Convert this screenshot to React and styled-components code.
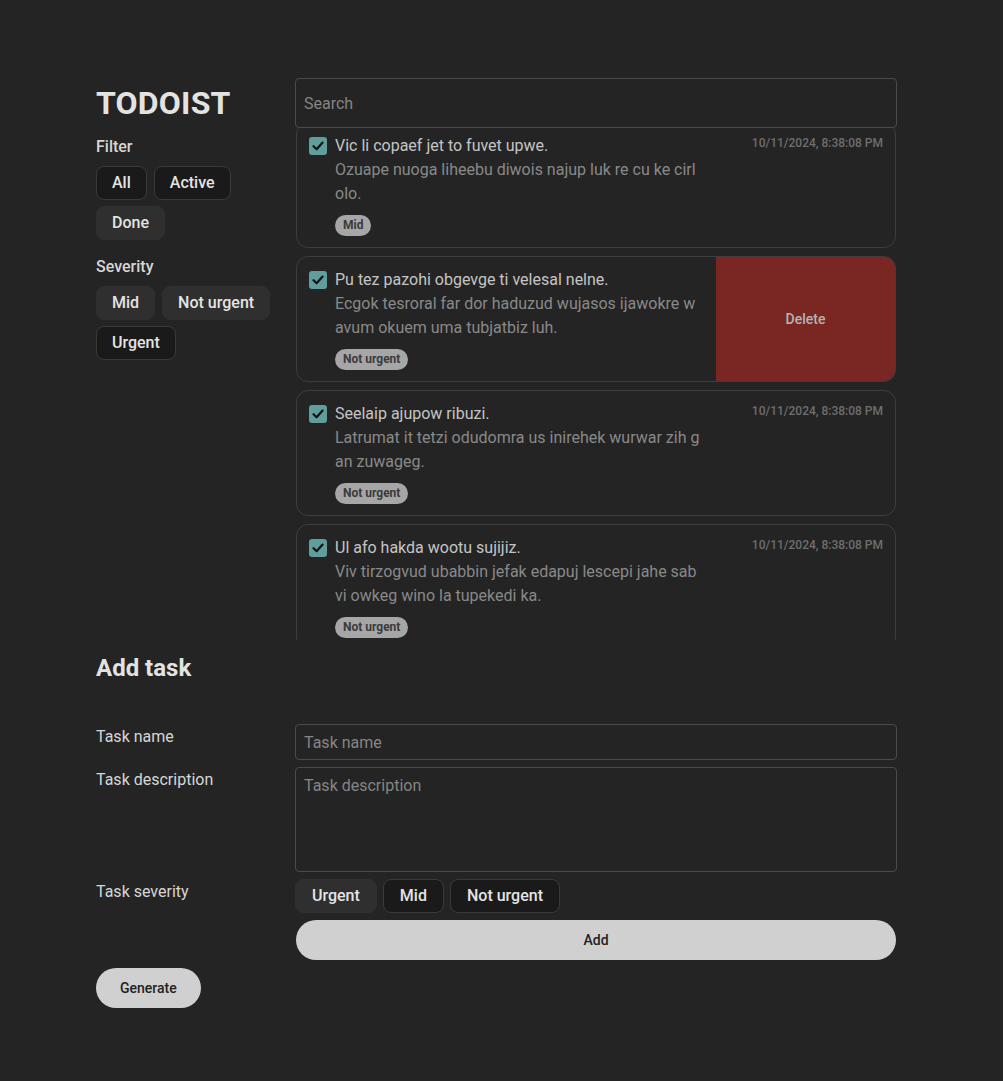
import React, { useEffect, useRef, useState } from 'react';
import styled, { createGlobalStyle } from 'styled-components';

const GlobalStyle = createGlobalStyle`
  html, body {
    margin: 0;
    padding: 0;
    background: #242424;
    color: rgba(255, 255, 255, 0.87);
    font-family: Roboto, "Liberation Sans", sans-serif;
  }
  * { box-sizing: border-box; }
`;

const Page = styled.div`
  width: 801px;
  padding: 78px 0 73px 0;
  margin-left: 96px;
`;

const Top = styled.div`
  display: grid;
  grid-template-columns: 179px 602px;
  column-gap: 20px;
`;

const Sidebar = styled.aside`
  display: flex;
  flex-direction: column;
`;

const Logo = styled.h1`
  margin: 0;
  font-size: 32px;
  font-weight: 700;
  line-height: 50px;
  color: #e3e3e3;
  letter-spacing: 0.2px;
`;

const Group = styled.div`
  display: flex;
  flex-direction: column;
  gap: 7px;
  margin-top: ${p => p.$top}px;
`;

const GroupLabel = styled.div`
  font-size: 16px;
  font-weight: 500;
  line-height: 24px;
  padding-top: 1px;
  color: #d6d6d6;
`;

const Chips = styled.div`
  display: flex;
  flex-wrap: wrap;
  gap: 6px 7px;
`;

const Chip = styled.button`
  font-family: inherit;
  font-size: 16px;
  font-weight: 500;
  line-height: 20px;
  padding: 6px 15px;
  border-radius: 8px;
  color: #e4e4e4;
  cursor: pointer;
  background: ${p => (p.$on ? '#2f2f2f' : '#1a1a1a')};
  border: 1px solid ${p => (p.$on ? '#2f2f2f' : '#3a3a3a')};
`;

const Main = styled.section`
  display: flex;
  flex-direction: column;
`;

const Search = styled.input`
  height: 50px;
  width: 100%;
  padding: 0 8px;
  background: #242424;
  border: 1px solid #4a4a4a;
  border-radius: 4px;
  color: #ddd;
  font-family: inherit;
  font-size: 16px;
  outline: none;
  &::placeholder { color: #858585; }
`;

const List = styled.div`
  height: 512px;
  overflow-y: auto;
  padding: 0 1px;
  display: flex;
  flex-direction: column;
  gap: 8px;
  scrollbar-width: none;
  &::-webkit-scrollbar { display: none; }
`;

const Card = styled.div`
  position: relative;
  flex: none;
  display: flex;
  align-items: flex-start;
  padding: 11px 12px;
  border: 1px solid #3d3d3d;
  border-radius: 12px;
  overflow: hidden;
  background: #242424;
`;

const Check = styled.span`
  flex: none;
  width: 18px;
  height: 18px;
  margin: 3px 8px 0 0;
  border-radius: 3px;
  background: #5f9e9d;
  display: flex;
  align-items: center;
  justify-content: center;
`;

const Body = styled.div`
  flex: 1;
  min-width: 0;
  display: flex;
  flex-direction: column;
  align-items: flex-start;
`;

const Title = styled.div`
  font-size: 16px;
  line-height: 24px;
  color: #c4c4c4;
`;

const Desc = styled.div`
  font-size: 16px;
  line-height: 24px;
  color: #898989;
  word-break: break-all;
`;

const Badge = styled.span`
  margin-top: 9px;
  padding: 2px 8px;
  border-radius: 11px;
  background: #a6a6a6;
  color: #3b3b3b;
  font-size: 12px;
  font-weight: 700;
  line-height: 17px;
`;

const Stamp = styled.div`
  flex: none;
  width: 182px;
  text-align: right;
  white-space: nowrap;
  font-size: 12px;
  font-weight: 500;
  line-height: 18px;
  color: #6e6e6e;
`;

const DeletePanel = styled.div`
  position: absolute;
  top: 0;
  right: 0;
  bottom: 0;
  width: 179px;
  background: #7a2622;
  display: flex;
  align-items: center;
  justify-content: center;
  font-size: 14px;
  font-weight: 500;
  color: #b4b4b4;
`;

const AddTitle = styled.h2`
  margin: 14px 0 0;
  font-size: 24px;
  font-weight: 700;
  line-height: 28px;
  color: #e3e3e3;
`;

const Form = styled.form`
  margin-top: 42px;
  display: grid;
  grid-template-columns: 179px 602px;
  column-gap: 20px;
  row-gap: 7px;
`;

const FieldLabel = styled.label`
  font-size: 16px;
  line-height: 24px;
  padding-top: 1px;
  color: #d6d6d6;
`;

const TextInput = styled.input`
  height: 36px;
  padding: 0 8px;
  background: #242424;
  border: 1px solid #4a4a4a;
  border-radius: 4px;
  color: #ddd;
  font-family: inherit;
  font-size: 16px;
  outline: none;
  &::placeholder { color: #858585; }
`;

const TextArea = styled.textarea`
  height: 105px;
  margin: 0;
  padding: 8px;
  resize: none;
  background: #242424;
  border: 1px solid #4a4a4a;
  border-radius: 4px;
  color: #ddd;
  font-family: inherit;
  font-size: 16px;
  line-height: 20px;
  outline: none;
  &::placeholder { color: #858585; }
`;

const SeverityRow = styled.div`
  display: flex;
  gap: 6px;
  & > button { padding-left: 16px; padding-right: 16px; }
`;

const PillButton = styled.button`
  height: 40px;
  padding: 0 24px;
  border: none;
  border-radius: 20px;
  background: #d0d0d0;
  color: #222;
  font-family: inherit;
  font-size: 14px;
  font-weight: 500;
  cursor: pointer;
  width: ${p => (p.$wide ? '600px' : 'auto')};
  margin-left: ${p => (p.$wide ? '1px' : '0')};
  justify-self: start;
`;

const Footer = styled.div`
  margin-top: 8px;
`;

const CheckMark = () => (
  <svg width="14" height="14" viewBox="0 0 14 14">
    <path d="M2.5 7.2 L5.6 10.2 L11.6 3.6" fill="none" stroke="#111" strokeWidth="2.2" strokeLinecap="round" strokeLinejoin="round" />
  </svg>
);

const tasks = [
  {
    id: 1,
    title: 'Vic li copaef jet to fuvet upwe.',
    desc: 'Ozuape nuoga liheebu diwois najup luk re cu ke cirlolo.',
    severity: 'Mid'
  },
  {
    id: 2,
    title: 'Pu tez pazohi obgevge ti velesal nelne.',
    desc: 'Ecgok tesroral far dor haduzud wujasos ijawokre wavum okuem uma tubjatbiz luh.',
    severity: 'Not urgent',
    swiped: true
  },
  {
    id: 3,
    title: 'Seelaip ajupow ribuzi.',
    desc: 'Latrumat it tetzi odudomra us inirehek wurwar zih gan zuwageg.',
    severity: 'Not urgent'
  },
  {
    id: 4,
    title: 'Ul afo hakda wootu sujijiz.',
    desc: 'Viv tirzogvud ubabbin jefak edapuj lescepi jahe sabvi owkeg wino la tupekedi ka.',
    severity: 'Not urgent'
  }
];

const App = () => {
  const listRef = useRef(null);
  const [filter] = useState('Done');

  useEffect(() => {
    // list is scrolled a little in the screenshot
    if (listRef.current) listRef.current.scrollTop = 6;
  }, []);

  return (
    <Page>
      <GlobalStyle />
      <Top>
        <Sidebar>
          <Logo>TODOIST</Logo>
          <Group $top={6}>
            <GroupLabel>Filter</GroupLabel>
            <Chips>
              {['All', 'Active', 'Done'].map(f => (
                <Chip key={f} type="button" $on={f === filter}>{f}</Chip>
              ))}
            </Chips>
          </Group>
          <Group $top={14}>
            <GroupLabel>Severity</GroupLabel>
            <Chips>
              <Chip type="button" $on>Mid</Chip>
              <Chip type="button" $on>Not urgent</Chip>
              <Chip type="button">Urgent</Chip>
            </Chips>
          </Group>
        </Sidebar>

        <Main>
          <Search placeholder="Search" />
          <List ref={listRef}>
            {tasks.map(t => (
              <Card key={t.id}>
                <Check><CheckMark /></Check>
                <Body>
                  <Title>{t.title}</Title>
                  <Desc>{t.desc}</Desc>
                  <Badge>{t.severity}</Badge>
                </Body>
                <Stamp>10/11/2024, 8:38:08 PM</Stamp>
                {t.swiped && <DeletePanel>Delete</DeletePanel>}
              </Card>
            ))}
          </List>
        </Main>
      </Top>

      <AddTitle>Add task</AddTitle>

      <Form onSubmit={e => e.preventDefault()}>
        <FieldLabel>Task name</FieldLabel>
        <TextInput placeholder="Task name" />
        <FieldLabel>Task description</FieldLabel>
        <TextArea placeholder="Task description" />
        <FieldLabel>Task severity</FieldLabel>
        <SeverityRow>
          <Chip type="button" $on>Urgent</Chip>
          <Chip type="button">Mid</Chip>
          <Chip type="button">Not urgent</Chip>
        </SeverityRow>
        <span />
        <PillButton type="submit" $wide>Add</PillButton>
      </Form>

      <Footer>
        <PillButton type="button">Generate</PillButton>
      </Footer>
    </Page>
  );
};

export default App;
